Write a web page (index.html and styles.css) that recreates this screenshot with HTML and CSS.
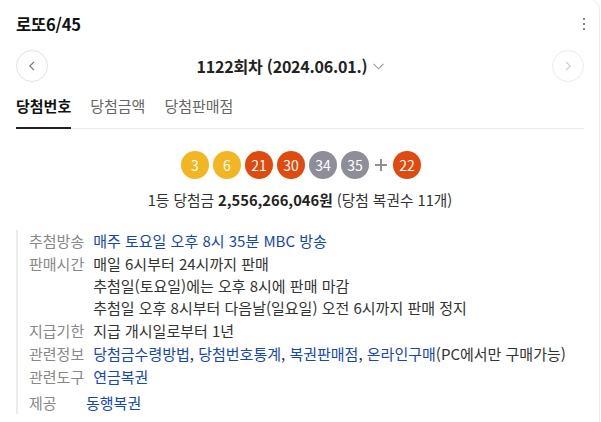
FILE: index.html
```html
<!DOCTYPE html>
<html lang="ko">
<head>
<meta charset="utf-8">
<title>로또6/45</title>
<link rel="stylesheet" href="styles.css">
</head>
<body>
<div class="card">
  <div class="head">
    <h2 class="title">로또6/45</h2>
    <button class="more" aria-label="더보기">
      <svg width="4" height="14" viewBox="0 0 4 14"><rect x="1" y="1" width="2" height="2" fill="#8a8a8a"/><rect x="1" y="6" width="2" height="2" fill="#8a8a8a"/><rect x="1" y="11" width="2" height="2" fill="#8a8a8a"/></svg>
    </button>
  </div>

  <div class="nav">
    <button class="circ" aria-label="이전 회차">
      <svg width="8" height="10" viewBox="0 0 8 10"><path d="M6 0.8 L1.8 5 L6 9.2" fill="none" stroke="#777" stroke-width="1.2"/></svg>
    </button>
    <div class="round">
      <span class="round-text">1122회차 (2024.06.01.)</span>
      <svg class="caret" width="11" height="7" viewBox="0 0 11 7"><path d="M0.5 0.8 L5.5 5.8 L10.5 0.8" fill="none" stroke="#9a9a9a" stroke-width="1.1"/></svg>
    </div>
    <button class="circ circ-off" aria-label="다음 회차">
      <svg width="8" height="10" viewBox="0 0 8 10"><path d="M2 0.8 L6.2 5 L2 9.2" fill="none" stroke="#cfcfcf" stroke-width="1.2"/></svg>
    </button>
  </div>

  <ul class="tabs">
    <li class="tab tab-on">당첨번호</li>
    <li class="tab">당첨금액</li>
    <li class="tab">당첨판매점</li>
  </ul>

  <div class="balls">
    <span class="ball ball-y">3</span>
    <span class="ball ball-y">6</span>
    <span class="ball ball-r">21</span>
    <span class="ball ball-r">30</span>
    <span class="ball ball-g">34</span>
    <span class="ball ball-g">35</span>
    <span class="plus"><svg width="12" height="12" viewBox="0 0 12 12"><rect x="0" y="5" width="12" height="2" fill="#8e8e8e"/><rect x="5" y="0" width="2" height="12" fill="#8e8e8e"/></svg></span>
    <span class="ball ball-r">22</span>
  </div>

  <p class="prize">1등 당첨금 <strong>2,556,266,046원</strong> (당첨 복권수 11개)</p>

  <dl class="info">
    <div class="row"><dt>추첨방송</dt><dd><a class="link">매주 토요일 오후 8시 35분 MBC 방송</a></dd></div>
    <div class="row"><dt>판매시간</dt><dd>매일 6시부터 24시까지 판매<br>추첨일(토요일)에는 오후 8시에 판매 마감<br>추첨일 오후 8시부터 다음날(일요일) 오전 6시까지 판매 정지</dd></div>
    <div class="row"><dt>지급기한</dt><dd>지급 개시일로부터 1년</dd></div>
    <div class="row"><dt>관련정보</dt><dd><a class="link">당첨금수령방법</a>, <a class="link">당첨번호통계</a>, <a class="link">복권판매점</a>, <a class="link">온라인구매</a>(PC에서만 구매가능)</dd></div>
    <div class="row"><dt>관련도구</dt><dd><a class="link">연금복권</a></dd></div>
    <div class="row row-last"><dt>제공</dt><dd><a class="link">동행복권</a></dd></div>
  </dl>
  <div class="divider"></div>
</div>
</body>
</html>
```

FILE: styles.css
```css
* { box-sizing: border-box; }
html, body { margin: 0; padding: 0; background: #fff; }
body {
  font-family: "Noto Sans CJK KR", "Noto Sans", sans-serif;
  color: #222;
  overflow: hidden;
}
.card {
  margin: -2px 1px 0 -10px;
  padding: 0 0 0 10px;
  border: 1px solid #ececec;
  border-radius: 12px;
  background: #fff;
  height: 440px;
}
.head {
  display: flex;
  align-items: center;
  justify-content: space-between;
  padding: 14px 12px 0 15px;
}
.title {
  margin: 0;
  font-size: 16.5px;
  line-height: 22px;
  font-weight: 700;
  color: #111;
  letter-spacing: -0.2px;
}
.more {
  border: 0;
  background: none;
  padding: 0;
  width: 6px;
  height: 14px;
  display: flex;
  align-items: center;
  justify-content: center;
}
.nav {
  display: flex;
  align-items: center;
  margin: 15px 15px 0 15px;
}
.circ {
  flex: none;
  width: 32px;
  height: 32px;
  border-radius: 50%;
  border: 1px solid #e3e3e3;
  background: #fff;
  padding: 0;
  display: flex;
  align-items: center;
  justify-content: center;
}
.circ-off { border-color: #ececec; }
.round {
  flex: 1;
  display: flex;
  align-items: center;
  justify-content: center;
  gap: 6px;
  padding-right: 19px;
}
.round-text {
  font-size: 16px;
  line-height: 22px;
  font-weight: 700;
  color: #222;
  letter-spacing: -0.2px;
}
.caret { margin-top: 1px; }
.tabs {
  list-style: none;
  margin: 14px 15px 0 15px;
  padding: 0;
  display: flex;
  gap: 19px;
  border-bottom: 1px solid #ebebeb;
}
.tab {
  font-size: 15px;
  line-height: 20px;
  color: #666;
  padding: 0 0 11px 0;
  border-bottom: 2px solid transparent;
  margin-bottom: -1px;
}
.tab-on {
  color: #111;
  font-weight: 700;
  border-bottom-color: #222;
}
.balls {
  display: flex;
  justify-content: center;
  align-items: center;
  gap: 4px;
  margin: 22px 15px 0 15px;
  padding-left: 2px;
}
.ball {
  width: 28px;
  height: 28px;
  border-radius: 50%;
  color: #fff;
  font-size: 14px;
  line-height: 28px;
  text-align: center;
}
.ball-y { background: #f2b622; }
.ball-r { background: #de4a0f; }
.ball-g { background: #8e8e9b; }
.plus {
  width: 16px;
  height: 28px;
  display: flex;
  align-items: center;
  justify-content: center;
}
.prize {
  margin: 11px 15px 0 15px;
  text-align: center;
  font-size: 14.7px;
  line-height: 20px;
  color: #333;
}
.prize strong { font-weight: 700; color: #222; }
.info {
  margin: 20px 15px 0 15px;
  padding: 0 0 0 11px;
  border-left: 2px solid #ececec;
  font-size: 15px;
  line-height: 22px;
  display: flex;
  flex-direction: column;
  gap: 1px;
}
.row { display: flex; }
.row-last { margin-top: 3px; }
.row dt {
  flex: none;
  min-width: 48px;
  margin-right: 9px;
  color: #888;
}
.row dd {
  margin: 0;
  color: #333;
}
.link { color: #1646b4; text-decoration: none; }
.divider {
  margin: 8px 20px 0 18px;
  border-top: 1px solid #ececec;
}
```
